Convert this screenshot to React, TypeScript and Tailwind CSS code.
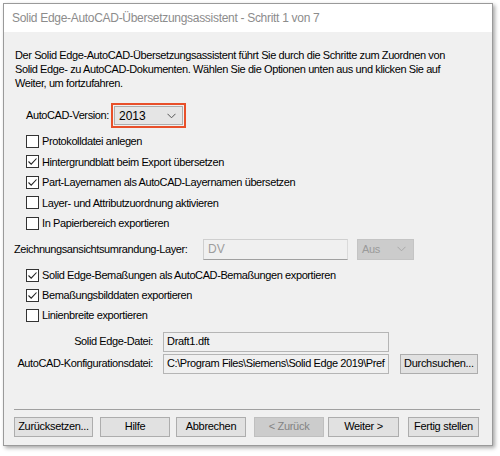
import React from "react";

const font = { fontFamily: '"Liberation Sans", Arial, sans-serif' };

function Check({ checked, label, h }: { checked?: boolean; label: string; h: string }) {
  return (
    <div className={`flex items-center ${h} pl-[22px]`}>
      <div className="w-[13px] h-[13px] border border-[#333333] bg-white flex items-center justify-center shrink-0">
        {checked && (
          <svg width="11" height="11" viewBox="0 0 11 11">
            <path d="M1.5 5.5 L4.2 8.2 L9.5 2.5" fill="none" stroke="#222" strokeWidth="1.1" />
          </svg>
        )}
      </div>
      <span className="ml-[3px] text-[11px] text-black tracking-[-0.4px] whitespace-nowrap">{label}</span>
    </div>
  );
}

function Btn({ label, w, disabled }: { label: string; w: string; disabled?: boolean }) {
  return (
    <div
      className={`${w} h-[20px] flex items-center justify-center text-[11px] tracking-[-0.3px] whitespace-nowrap border ${
        disabled ? "bg-[#cccccc] border-[#bfbfbf] text-[#838383]" : "bg-[#e1e1e1] border-[#adadad] text-black"
      }`}
    >
      {label}
    </div>
  );
}

export default function App() {
  return (
    <div className="w-[500px] h-[456px] bg-white pt-[3px] pl-[3px]" style={font}>
      <div className="w-[490px] h-[443px] border border-[#9a9a9a] bg-[#f0f0f0] flex flex-col shadow-[2px_2px_4px_rgba(0,0,0,0.35)]">
        <div className="h-[28px] bg-white flex items-center pl-[8px] text-[12px] text-[#8c8c8c] tracking-[-0.3px] whitespace-nowrap">
          Solid Edge-AutoCAD-Übersetzungsassistent - Schritt 1 von 7
        </div>
        <div className="flex flex-col">
          <div className="mt-[16px] pl-[11px] text-[11px] leading-[14px] text-black tracking-[-0.4px] whitespace-nowrap">
            <div>Der Solid Edge-AutoCAD-Übersetzungsassistent führt Sie durch die Schritte zum Zuordnen von</div>
            <div>Solid Edge- zu AutoCAD-Dokumenten. Wählen Sie die Optionen unten aus und klicken Sie auf</div>
            <div>Weiter, um fortzufahren.</div>
          </div>
          <div className="mt-[13px] h-[25px] flex items-center pl-[22px]">
            <span className="text-[11px] tracking-[-0.4px] w-[85px] whitespace-nowrap">AutoCAD-Version:</span>
            <div className="w-[75px] h-[25px] border-2 border-[#e8502a] p-[1px]">
              <div className="w-full h-full bg-[#e5e5e5] border border-[#adadad] flex items-center justify-between pl-[4px] pr-[6px]">
                <span className="text-[12px]">2013</span>
                <svg width="9" height="6" viewBox="0 0 9 6">
                  <path d="M0.5 0.8 L4.5 4.8 L8.5 0.8" fill="none" stroke="#555" strokeWidth="1" />
                </svg>
              </div>
            </div>
          </div>
          <div className="mt-[3px] flex flex-col">
            <Check h="h-[20.5px]" label="Protokolldatei anlegen" />
            <Check h="h-[20.5px]" checked label="Hintergrundblatt beim Export übersetzen" />
            <Check h="h-[20.5px]" checked label="Part-Layernamen als AutoCAD-Layernamen übersetzen" />
            <Check h="h-[20.5px]" label="Layer- und Attributzuordnung aktivieren" />
            <Check h="h-[20.5px]" label="In Papierbereich exportieren" />
          </div>
          <div className="mt-[5px] h-[21px] flex items-center pl-[10px]">
            <span className="text-[11px] tracking-[-0.4px] w-[189px] whitespace-nowrap">Zeichnungsansichtsumrandung-Layer:</span>
            <div className="w-[145px] h-[21px] border border-[#cfcfcf] border-b-[#a0a0a0] border-r-[#dadada] bg-[#f0f0f0] flex items-center pl-[4px] text-[12px] text-[#9d9d9d]">
              DV
            </div>
            <div className="ml-[9px] w-[57px] h-[21px] bg-[#cccccc] border border-[#c4c4c4] flex items-center justify-between pl-[4px] pr-[7px] text-[11px] text-[#9a9a9a] tracking-[-0.3px]">
              <span>Aus</span>
              <svg width="9" height="6" viewBox="0 0 9 6">
                <path d="M0.5 0.8 L4.5 4.8 L8.5 0.8" fill="none" stroke="#a8a8a8" strokeWidth="1" />
              </svg>
            </div>
          </div>
          <div className="mt-[6px] flex flex-col">
            <Check h="h-[20px]" checked label="Solid Edge-Bemaßungen als AutoCAD-Bemaßungen exportieren" />
            <Check h="h-[20px]" checked label="Bemaßungsbilddaten exportieren" />
            <Check h="h-[20px]" label="Linienbreite exportieren" />
          </div>
          <div className="mt-[6px] h-[20px] flex items-center">
            <span className="w-[149px] text-right text-[11px] tracking-[-0.4px] whitespace-nowrap">Solid Edge-Datei:</span>
            <div className="ml-[10px] w-[226px] h-[20px] border border-[#b5b5b5] bg-[#f0f0f0] flex items-center pl-[3px] text-[11px] tracking-[-0.3px] whitespace-nowrap">
              Draft1.dft
            </div>
          </div>
          <div className="mt-[2px] h-[20px] flex items-center">
            <span className="w-[149px] text-right text-[11px] tracking-[-0.4px] whitespace-nowrap">AutoCAD-Konfigurationsdatei:</span>
            <div className="ml-[10px] w-[226px] h-[20px] border border-[#b5b5b5] bg-[#f0f0f0] flex items-center pl-[3px] text-[11px] tracking-[-0.4px] overflow-hidden whitespace-nowrap">
              C:\Program Files\Siemens\Solid Edge 2019\Pref
            </div>
            <div className="ml-[11px]">
              <Btn label="Durchsuchen..." w="w-[78px]" />
            </div>
          </div>
          <div className="mt-[35px] ml-[10px] w-[466px] h-px bg-[#a0a0a0]" />
          <div className="mt-[7px] flex items-center pl-[10px]">
            <Btn label="Zurücksetzen..." w="w-[79px]" />
            <div className="ml-[7px]"><Btn label="Hilfe" w="w-[70px]" /></div>
            <div className="ml-[6px]"><Btn label="Abbrechen" w="w-[70px]" /></div>
            <div className="ml-[8px]"><Btn label="< Zurück" w="w-[70px]" disabled /></div>
            <div className="ml-[4px]"><Btn label="Weiter >" w="w-[71px]" /></div>
            <div className="ml-[9px]"><Btn label="Fertig stellen" w="w-[71px]" /></div>
          </div>
        </div>
      </div>
    </div>
  );
}
